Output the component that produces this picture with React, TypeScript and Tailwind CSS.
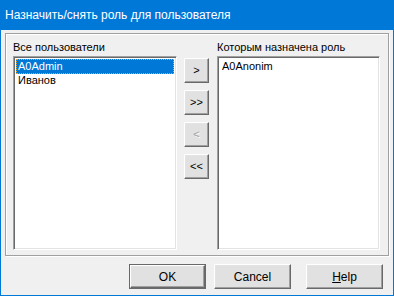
const font = "font-['Liberation_Sans',Arial,sans-serif]";

const raised =
  "border border-t-white border-l-white border-r-[#696969] border-b-[#696969] shadow-[inset_-1px_-1px_0_#a0a0a0,inset_1px_1px_0_#e3e3e3] bg-[#e1e1e1]";
const sunken =
  "border border-t-[#a0a0a0] border-l-[#a0a0a0] border-r-white border-b-white shadow-[inset_1px_1px_0_#696969,inset_-1px_-1px_0_#e3e3e3] bg-white";

function MoveButton({ label, disabled }: { label: string; disabled?: boolean }) {
  return (
    <div className={`flex h-[25px] w-[25px] items-center justify-center ${raised}`}>
      <span
        className={
          disabled
            ? "text-[11px] leading-none text-[#a0a0a0] [text-shadow:1px_1px_0_#fff]"
            : "text-[11px] leading-none text-black"
        }
      >
        {label}
      </span>
    </div>
  );
}

function DialogButton({ children, isDefault }: { children: React.ReactNode; isDefault?: boolean }) {
  if (isDefault) {
    return (
      <div className="h-[25px] w-[77px] border border-[#696969]">
        <div className={`flex h-full w-full items-center justify-center text-[12px] ${raised}`}>{children}</div>
      </div>
    );
  }
  return (
    <div className={`flex h-[25px] w-[77px] items-center justify-center text-[12px] ${raised}`}>{children}</div>
  );
}

export default function App() {
  return (
    <div className={`flex h-[296px] w-[394px] flex-col border border-t-0 border-[#0078d7] bg-[#f0f0f0] text-black ${font}`}>
      <div className="flex h-[30px] items-center bg-[#0078d7] pl-[4px] text-[12px] text-white">
        Назначить/снять роль для пользователя
      </div>

      <div className="ml-[4px] mt-[3px] h-[223px] w-[384px] border border-[#a0a0a0] shadow-[inset_1px_1px_0_#fff,1px_1px_0_#fff]">
        <div className="grid grid-cols-[164px_25px_164px] gap-x-[7px] pl-[7px] pt-[5px]">
          <div className="h-[17px] text-[11px] leading-[17px]">Все пользователи</div>
          <div />
          <div className="h-[17px] pl-px text-[11px] leading-[17px]">Которым назначена роль</div>

          <div className={`h-[194px] p-[2px] text-[11px] leading-[13px] ${sunken}`}>
            <div className="border border-dotted border-[#f5a623] bg-[#0078d7] pl-[1px] text-white">A0Admin</div>
            <div className="pl-[2px]">Иванов</div>
          </div>

          <div className="flex flex-col gap-[7px] pt-[2px]">
            <MoveButton label=">" />
            <MoveButton label=">>" />
            <MoveButton label="<" disabled />
            <MoveButton label="<<" />
          </div>

          <div className={`ml-px h-[194px] p-[2px] text-[11px] leading-[13px] ${sunken}`}>
            <div className="pl-[2px] pt-px">A0Anonim</div>
          </div>
        </div>
      </div>

      <div className="mt-[8px] flex pl-[128px]">
        <DialogButton isDefault>OK</DialogButton>
        <div className="ml-[8px]">
          <DialogButton>Cancel</DialogButton>
        </div>
        <div className="ml-[15px]">
          <DialogButton>
            <span>
              <span className="underline">H</span>elp
            </span>
          </DialogButton>
        </div>
      </div>
    </div>
  );
}
